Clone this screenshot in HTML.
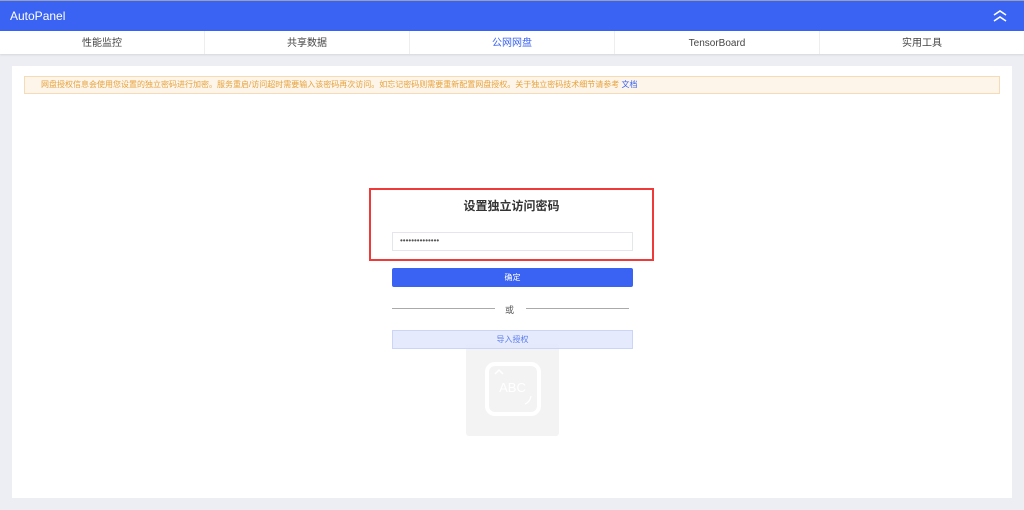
<!DOCTYPE html>
<html><head><meta charset="utf-8"><style>
*{margin:0;padding:0;box-sizing:border-box}
body{width:1024px;height:510px;background:#eceef4;font-family:"Liberation Sans","Noto Sans CJK SC",sans-serif;position:relative;overflow:hidden}
.top{position:absolute;left:0;top:0;width:1024px;height:1px;background:#9aa0b0}
.hdr{position:absolute;left:0;top:1px;width:1024px;height:30px;background:#3a63f3;color:#fff;font-size:12px;line-height:30px;padding-left:10px}
.tabs{position:absolute;left:0;top:31px;width:1024px;height:23px;background:#fff;display:flex;box-shadow:0 1px 2px rgba(0,0,0,.1)}
.tabs div{flex:1;text-align:center;font-size:10px;line-height:25px;color:#444;border-right:1px solid #eee}
.panel{position:absolute;left:12px;top:66px;width:1000px;height:432px;background:#fff}
.notice{position:absolute;left:24px;top:76px;width:976px;height:18px;background:#fdf5ea;border:1px solid #f6dcb6;font-size:8px;color:#e6a23c;line-height:16px;padding-left:16px}
.notice span{color:#3a63f3}
.abs{position:absolute}
</style></head><body>
<div class="top"></div>
<div class="hdr">AutoPanel
<svg class="abs" style="left:992px;top:8px" width="16" height="14" viewBox="0 0 16 14"><path d="M2 6 L8 2 L14 6 M2 12 L8 8 L14 12" stroke="#fff" stroke-width="1.6" fill="none"/></svg></div>
<div class="tabs"><div>性能监控</div><div>共享数据</div><div style="color:#3a63f3">公网网盘</div><div>TensorBoard</div><div style="border:none">实用工具</div></div>
<div class="panel"></div>
<div class="notice">网盘授权信息会使用您设置的独立密码进行加密。服务重启/访问超时需要输入该密码再次访问。如忘记密码则需要重新配置网盘授权。关于独立密码技术细节请参考 <span>文档</span></div>
<div class="abs" style="left:466px;top:344px;width:93px;height:92px;background:#f3f3f3;border-radius:3px"></div>
<div class="abs" style="left:485px;top:362px;width:56px;height:54px;border:4px solid #fff;border-radius:10px"></div>
<svg class="abs" style="left:485px;top:362px" width="56" height="54" viewBox="0 0 56 54"><path d="M10 12 L14 8 L18 12" stroke="#fff" stroke-width="1.5" fill="none"/><path d="M46 34 Q45 40 40 42" stroke="#fff" stroke-width="1.2" fill="none"/></svg>
<div class="abs" style="left:466px;top:380px;width:93px;text-align:center;color:#fff;font-size:13px">ABC</div>
<div class="abs" style="left:369px;top:188px;width:285px;height:73px;border:2px solid #f03a3a"></div>
<div class="abs" style="left:369px;top:197px;width:285px;text-align:center;font-size:12px;font-weight:bold;color:#333">设置独立访问密码</div>
<div class="abs" style="left:392px;top:232px;width:241px;height:19px;border:1px solid #e4e6ec;font-size:8px;color:#555;padding-left:7px;line-height:16px">••••••••••••••</div>
<div class="abs" style="left:392px;top:268px;width:241px;height:19px;background:#3a63f3;border-radius:2px;color:#fff;font-size:8px;text-align:center;line-height:19px">确定</div>
<div class="abs" style="left:392px;top:308px;width:103px;height:1px;background:#aaa"></div>
<div class="abs" style="left:526px;top:308px;width:103px;height:1px;background:#aaa"></div>
<div class="abs" style="left:505px;top:303px;font-size:9px;color:#555">或</div>
<div class="abs" style="left:392px;top:330px;width:241px;height:19px;background:rgba(225,232,252,.85);border:1px solid #cbd5fa;color:#5b7cf0;font-size:8px;text-align:center;line-height:17px">导入授权</div>
</body></html>
